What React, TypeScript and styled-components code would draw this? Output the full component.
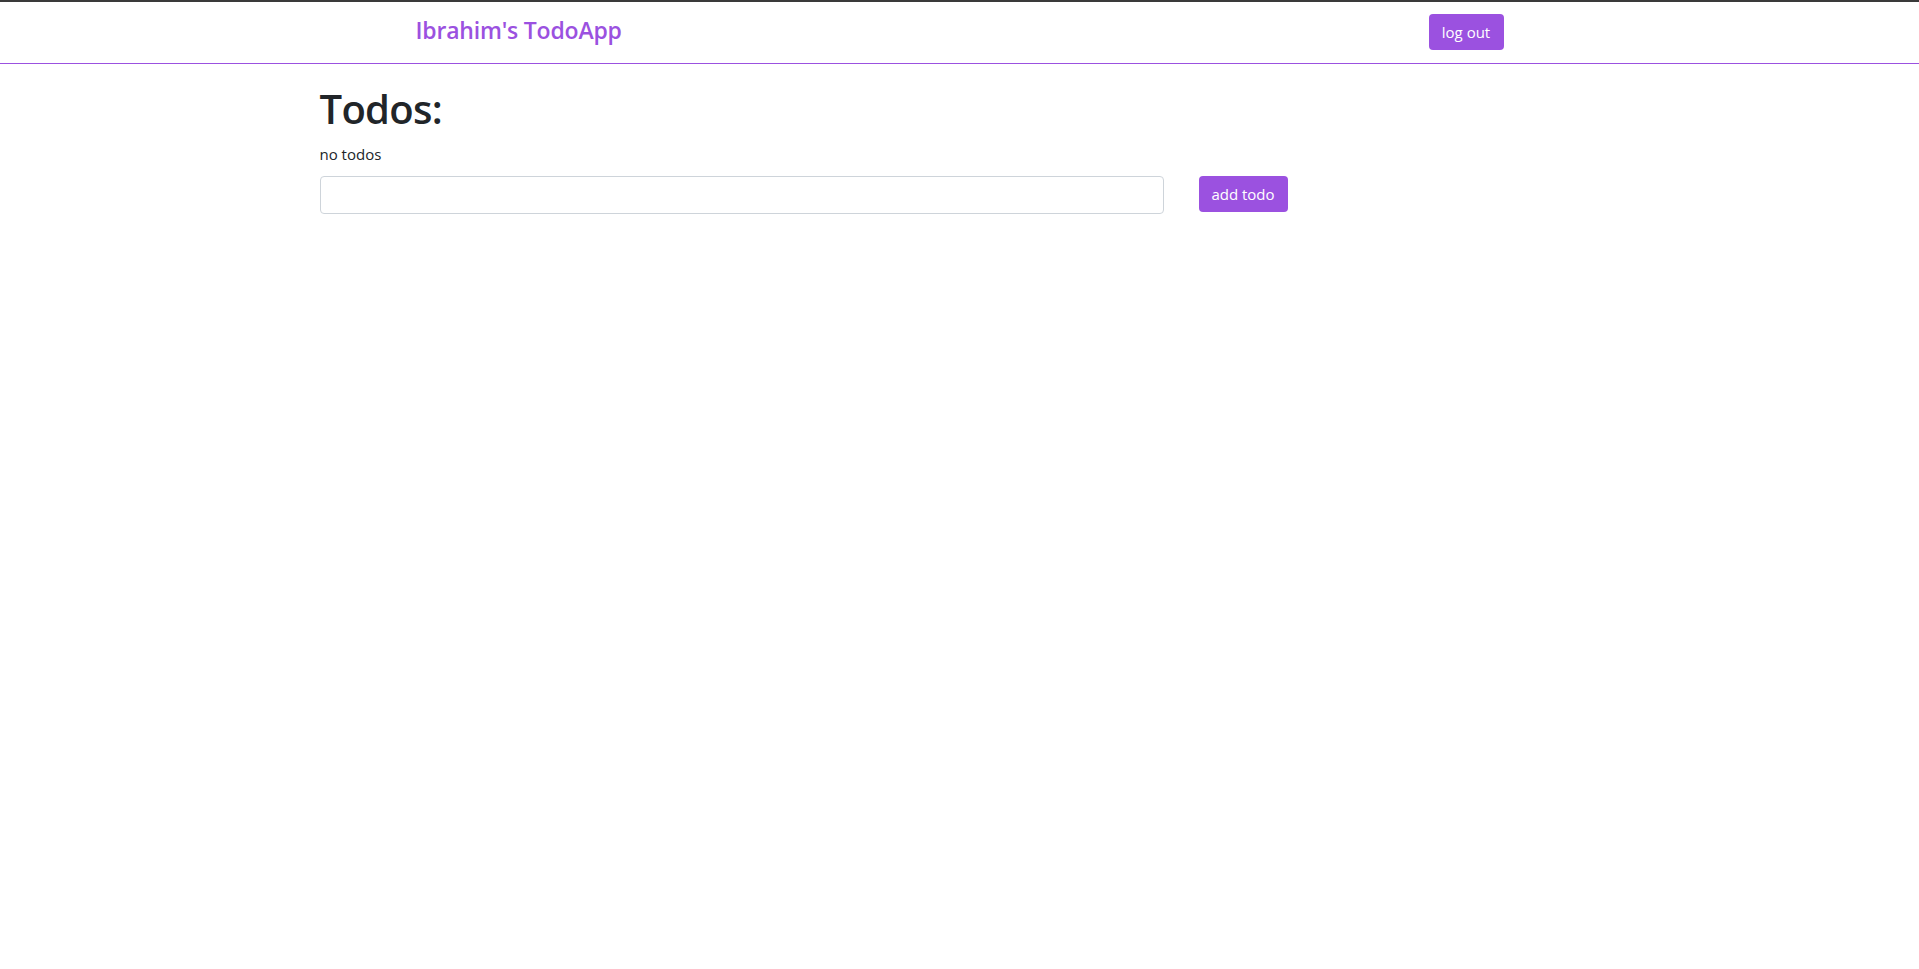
import React, { useState } from "react";
import styled, { createGlobalStyle } from "styled-components";

const GlobalStyle = createGlobalStyle`
  html, body { margin: 0; padding: 0; background: #fff; }
  body {
    font-family: "Open Sans", "Noto Sans", "Liberation Sans", sans-serif;
    color: #212529;
    border-top: 2px solid #3a3a3a;
  }
  * { box-sizing: border-box; }
`;

const Header = styled.header`
  height: 62px;
  border-bottom: 1px solid #9b51e0;
  display: flex;
  justify-content: center;
`;

const HeaderInner = styled.div`
  width: 1088px;
  display: flex;
  align-items: center;
  justify-content: space-between;
`;

const Brand = styled.a`
  color: #9b51e0;
  font-size: 23px;
  font-weight: 600;
  text-decoration: none;
  margin-top: -6px;
  letter-spacing: -0.2px;
`;

const Button = styled.button`
  background: #9b51e0;
  color: #fff;
  border: none;
  border-radius: 4px;
  font-family: inherit;
  font-size: 15px;
  height: 36px;
  padding: 0 12px;
  cursor: pointer;
`;

const LogoutButton = styled(Button)`
  width: 75px;
  margin-top: -1px;
`;

const Main = styled.main`
  width: 1280px;
  margin: 0 auto;
  padding-top: 21px;
`;

const Title = styled.h1`
  margin: 0;
  font-size: 40px;
  font-weight: 600;
  line-height: 48px;
  letter-spacing: -0.7px;
`;

const Empty = styled.p`
  margin: 11px 0 12px;
  font-size: 15px;
  line-height: 20px;
`;

const Form = styled.form`
  display: flex;
  align-items: flex-start;
  gap: 35px;
`;

const Input = styled.input`
  width: 844px;
  height: 38px;
  border: 1px solid #ced4da;
  border-radius: 4px;
  padding: 6px 12px;
  font-family: inherit;
  font-size: 16px;
  outline: none;
`;

const AddButton = styled(Button)`
  width: 89px;
`;

export default function App() {
  const [value, setValue] = useState("");
  return (
    <>
      <GlobalStyle />
      <Header>
        <HeaderInner>
          <Brand href="#">Ibrahim's TodoApp</Brand>
          <LogoutButton>log out</LogoutButton>
        </HeaderInner>
      </Header>
      <Main>
        <Title>Todos:</Title>
        <Empty>no todos</Empty>
        <Form onSubmit={(e) => e.preventDefault()}>
          <Input value={value} onChange={(e) => setValue(e.target.value)} />
          <AddButton type="submit">add todo</AddButton>
        </Form>
      </Main>
    </>
  );
}
